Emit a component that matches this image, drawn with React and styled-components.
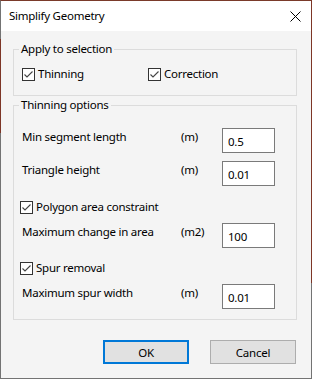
import React from 'react';
import styled, { createGlobalStyle } from 'styled-components';

const Global = createGlobalStyle`
  html, body { margin: 0; padding: 0; background: #fff; }
  body {
    font-family: "Noto Sans", "Liberation Sans", sans-serif;
    font-size: 11.5px;
    letter-spacing: -0.25px;
    color: #000;
  }
  * { box-sizing: border-box; }
`;

const Frame = styled.div`
  position: relative;
  width: 312px;
  height: 379px;
  border: 1px solid #737373;
  border-top-color: #7a3a2a;
  display: flex;
  flex-direction: column;
  background: #f4f4f4;
  &::before {
    content: '';
    position: absolute;
    left: -1px;
    top: 38px;
    width: 1px;
    height: 94px;
    background: #7d3626;
  }
  &::after {
    content: '';
    position: absolute;
    right: -1px;
    top: -1px;
    width: 1px;
    height: 283px;
    background: #7d3626;
  }
`;

const TitleBar = styled.div`
  height: 30px;
  flex: none;
  background: #fff;
  display: flex;
  align-items: center;
  justify-content: space-between;
  padding: 0 10px 0 8px;
`;

const Title = styled.span`
  line-height: 16px;
`;

const Body = styled.div`
  flex: 1;
  display: flex;
  flex-direction: column;
  padding: 10px 14px 0 12px;
`;

const Group = styled.fieldset`
  margin: ${p => p.$top || 0}px 0 0 0;
  padding: 0;
  border: 1px solid #dcdcdc;
  min-width: 0;
`;

const Legend = styled.legend`
  margin-left: 5px;
  padding: 0 2px;
  line-height: 16px;
`;

const GroupInner = styled.div`
  display: flex;
  flex-direction: column;
  padding: ${p => p.$pad};
`;

const CheckGrid = styled.div`
  display: grid;
  grid-template-columns: 126px auto;
`;

const CheckLabel = styled.label`
  display: flex;
  align-items: center;
  gap: 3px;
  height: 16px;
  line-height: 16px;
  margin: ${p => p.$top || 0}px 0 0 ${p => p.$left || 0}px;
`;

const FieldRow = styled.div`
  display: grid;
  grid-template-columns: 159px 41px 53px;
  height: 25px;
  margin-top: ${p => p.$top || 0}px;
`;

const FieldText = styled.span`
  line-height: 16px;
  align-self: start;
  padding-top: 1px;
`;

const Field = styled.input`
  width: 53px;
  height: 25px;
  border: 1px solid #7a7a7a;
  background: #fff;
  font-family: inherit;
  font-size: inherit;
  letter-spacing: inherit;
  line-height: 16px;
  padding: 4px 0 3px 5px;
  color: #000;
  outline: none;
`;

const ButtonRow = styled.div`
  display: flex;
  justify-content: flex-end;
  gap: 21px;
  margin-top: 20px;
  padding-right: 1px;
`;

const Button = styled.button`
  width: 86px;
  height: 24px;
  background: #e1e1e1;
  border: ${p => (p.$primary ? '2px solid #0078d7' : '1px solid #adadad')};
  font-family: inherit;
  font-size: inherit;
  letter-spacing: inherit;
  color: #000;
  padding: 0;
`;

const CheckIcon = () => (
  <svg width="13" height="13" viewBox="0 0 13 13">
    <rect x="0.5" y="0.5" width="12" height="12" fill="#fff" stroke="#333" />
    <path d="M2.5 6.5 L5 9 L10.5 3.5" fill="none" stroke="#444" strokeWidth="1.1" />
  </svg>
);

const CloseIcon = () => (
  <svg width="11" height="11" viewBox="0 0 11 11">
    <path d="M0.5 0.5 L10.5 10.5 M10.5 0.5 L0.5 10.5" stroke="#000" strokeWidth="1" fill="none" />
  </svg>
);

const Check = ({ children, top, left }) => (
  <CheckLabel $top={top} $left={left}>
    <CheckIcon />
    <span>{children}</span>
  </CheckLabel>
);

const Row = ({ label, unit, value, top }) => (
  <FieldRow $top={top}>
    <FieldText>{label}</FieldText>
    <FieldText>{unit}</FieldText>
    <Field defaultValue={value} />
  </FieldRow>
);

export default function App() {
  return (
    <>
      <Global />
      <Frame>
        <TitleBar>
          <Title>Simplify Geometry</Title>
          <CloseIcon />
        </TitleBar>
        <Body>
          <Group>
            <Legend>Apply to selection</Legend>
            <GroupInner $pad="9px 8px 13px 8px">
              <CheckGrid>
                <Check>Thinning</Check>
                <Check>Correction</Check>
              </CheckGrid>
            </GroupInner>
          </Group>
          <Group $top={1}>
            <Legend>Thinning options</Legend>
            <GroupInner $pad="15px 8px 10px 8px">
              <Row label="Min segment length" unit="(m)" value="0.5" />
              <Row label="Triangle height" unit="(m)" value="0.01" top={8} />
              <Check top={13} left={-2}>Polygon area constraint</Check>
              <Row label="Maximum change in area" unit="(m2)" value="100" top={8} />
              <Check top={12} left={-2}>Spur removal</Check>
              <Row label="Maximum spur width" unit="(m)" value="0.01" top={8} />
            </GroupInner>
          </Group>
          <ButtonRow>
            <Button $primary>OK</Button>
            <Button>Cancel</Button>
          </ButtonRow>
        </Body>
      </Frame>
    </>
  );
}
